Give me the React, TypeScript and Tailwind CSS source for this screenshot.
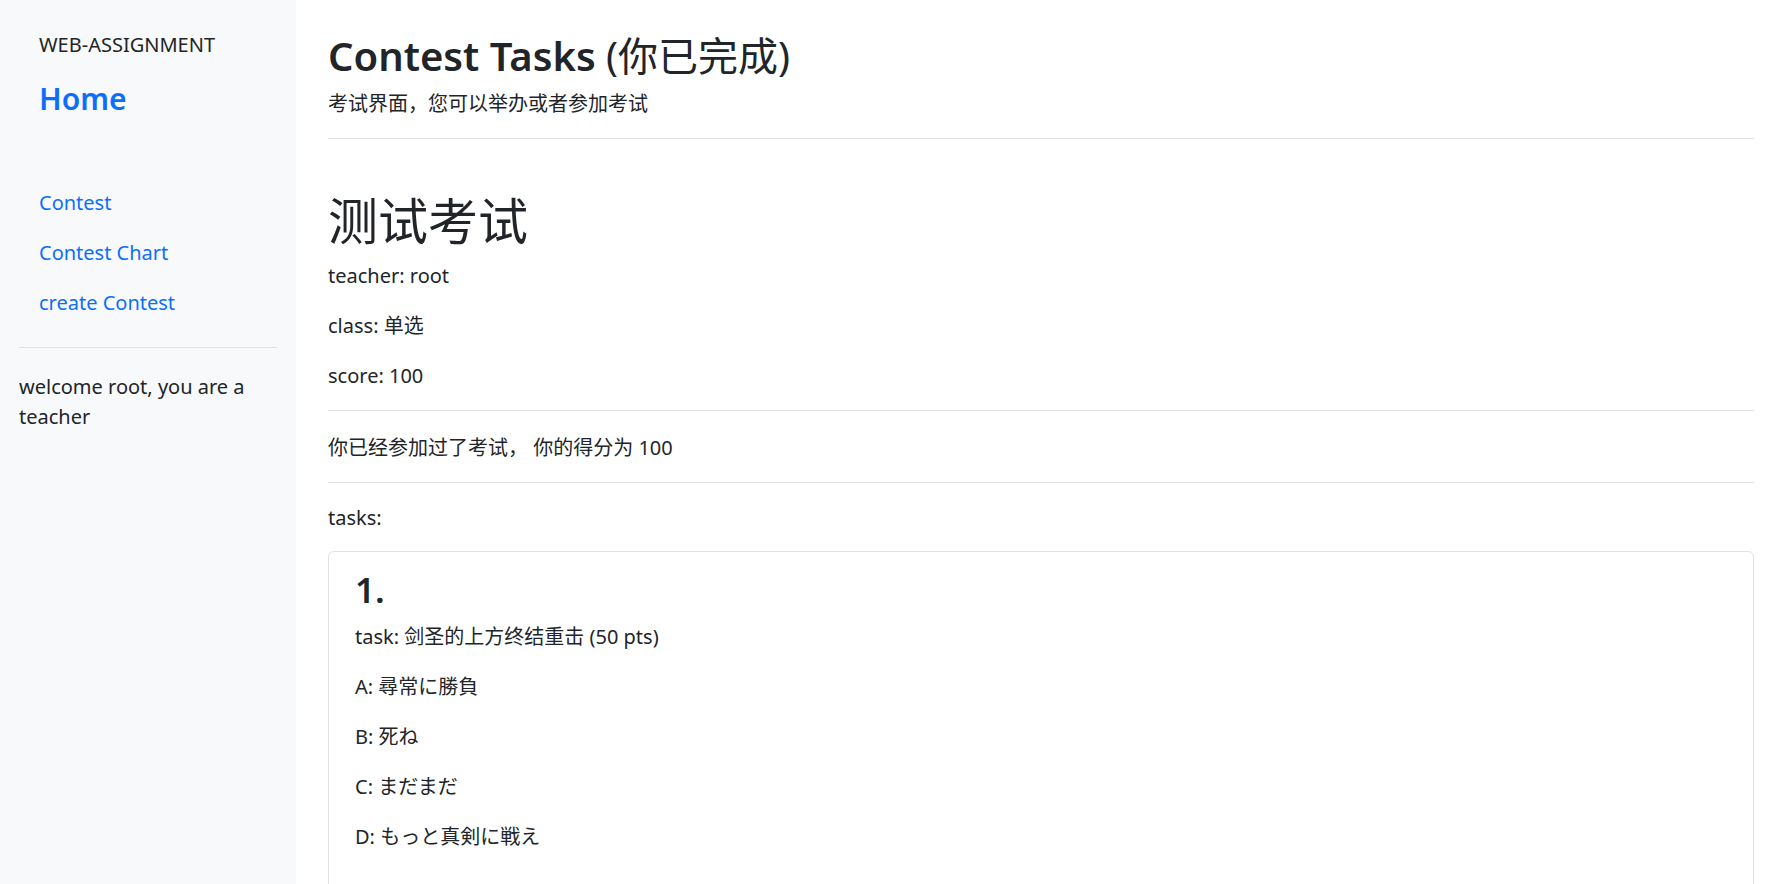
import React from "react";

const font = { fontFamily: '"Noto Sans", "Noto Sans CJK SC", sans-serif' };

const navLinks = ["Contest", "Contest Chart", "create Contest"];

const options = [
  { key: "A", text: "尋常に勝負" },
  { key: "B", text: "死ね" },
  { key: "C", text: "まだまだ" },
  { key: "D", text: "もっと真剣に戦え" },
];

function Sidebar() {
  return (
    <aside className="w-[296px] shrink-0 bg-[#f8f9fa] px-[19px] pt-[30px] min-h-screen">
      <div className="px-5 text-[20px] leading-[30px] text-[#212529]">
        WEB-ASSIGNMENT
      </div>
      <div className="px-5 mt-[21px] text-[30px] leading-[36px] font-semibold text-[#0d6efd]">
        Home
      </div>
      <ul className="mt-[61px]">
        {navLinks.map((name) => (
          <li key={name}>
            <a href="#" className="block px-5 py-[10px] text-[20px] leading-[30px] text-[#0d6efd]">
              {name}
            </a>
          </li>
        ))}
      </ul>
      <hr className="mt-[19px] border-t border-[#dee2e6]" />
      <p className="mt-[24px] text-[20px] leading-[30px] text-[#212529]">
        welcome root, you are a teacher
      </p>
    </aside>
  );
}

export default function App() {
  return (
    <div className="flex min-h-screen bg-white text-[#212529]" style={font}>
      <Sidebar />
      <main className="flex-1 pl-8 pr-[19px] pt-[32px]">
        <h2 className="text-[40px] leading-[48px]">
          <span className="font-semibold">Contest Tasks</span> (你已完成)
        </h2>
        <p className="mt-[9px] text-[20px] leading-[30px]">
          考试界面，您可以举办或者参加考试
        </p>
        <hr className="mt-[19px] border-t border-[#dee2e6]" />

        <h1 className="mt-[52px] text-[50px] leading-[60px]">测试考试</h1>
        <div className="mt-[10px] space-y-5 text-[20px] leading-[30px]">
          <p>teacher: root</p>
          <p>class: 单选</p>
          <p>score: 100</p>
        </div>
        <hr className="mt-[19px] border-t border-[#dee2e6]" />
        <p className="mt-[22px] mb-[19px] text-[20px] leading-[30px]">
          你已经参加过了考试， 你的得分为 100
        </p>
        <hr className="border-t border-[#dee2e6]" />
        <p className="mt-5 text-[20px] leading-[30px]">tasks:</p>

        {/* task card */}
        <div className="mt-[18px] rounded-md border border-[#dee2e6] px-[26px] pt-[17px] pb-10">
          <h3 className="text-[35px] leading-[42px] font-semibold">1.</h3>
          <div className="mt-[11px] space-y-5 text-[20px] leading-[30px]">
            <p>task: 剑圣的上方终结重击 (50 pts)</p>
            {options.map((o) => (
              <p key={o.key}>
                {o.key}: {o.text}
              </p>
            ))}
          </div>
        </div>
      </main>
    </div>
  );
}
